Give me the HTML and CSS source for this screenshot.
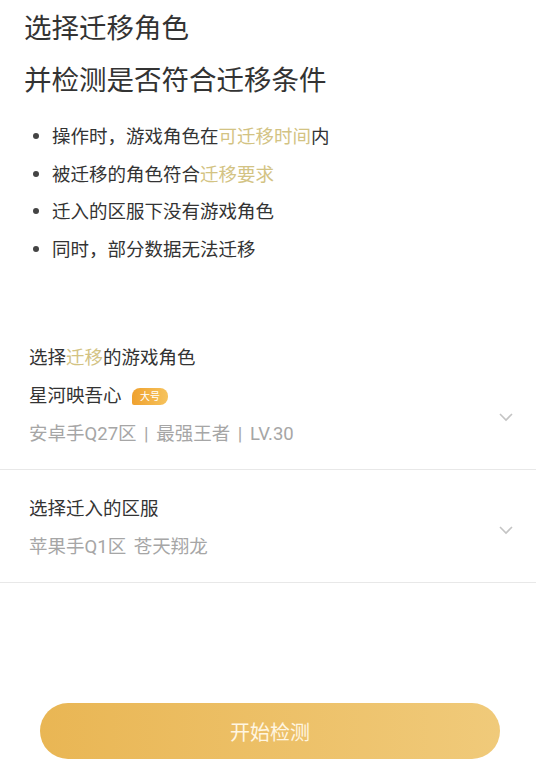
FILE: index.html
```html
<!DOCTYPE html>
<html lang="zh-CN">
<head>
    <meta charset="UTF-8">
    <meta name="viewport" content="width=device-width, initial-scale=1.0">
    <title>选择迁移角色</title>
    <link rel="stylesheet" href="styles.css">
</head>
<body>
    <div class="intro">
        <h1 class="title">选择迁移角色<br>并检测是否符合迁移条件</h1>
        <ul class="rules">
            <li>操作时，游戏角色在<span class="hl">可迁移时间</span>内</li>
            <li>被迁移的角色符合<span class="hl">迁移要求</span></li>
            <li>迁入的区服下没有游戏角色</li>
            <li>同时，部分数据无法迁移</li>
        </ul>
    </div>

    <div class="picker picker-first">
        <div class="picker-body">
            <div class="picker-label">选择<span class="hl">迁移</span>的游戏角色</div>
            <div class="picker-name">星河映吾心 <span class="badge">大号</span></div>
            <div class="picker-value">安卓手Q27区 | 最强王者 | LV.30</div>
        </div>
        <svg class="chevron" width="16" height="10" viewBox="0 0 16 10"><path d="M2 2 L8 8 L14 2" fill="none" stroke="#c4c4c4" stroke-width="1.6"/></svg>
    </div>

    <div class="picker">
        <div class="picker-body">
            <div class="picker-label">选择迁入的区服</div>
            <div class="picker-value">苹果手Q1区 苍天翔龙</div>
        </div>
        <svg class="chevron" width="16" height="10" viewBox="0 0 16 10"><path d="M2 2 L8 8 L14 2" fill="none" stroke="#c4c4c4" stroke-width="1.6"/></svg>
    </div>

    <button class="start">开始检测</button>
</body>
</html>
```

FILE: styles.css
```css
body {
    margin: 0;
    background: #fff;
    color: #333;
    font-family: "Noto Sans CJK SC", "Noto Sans", sans-serif;
}
.intro {
    padding: 0 24px;
}
.title {
    margin: 0;
    font-size: 27.5px;
    font-weight: 400;
    line-height: 52px;
    color: #333;
}
.rules {
    list-style: none;
    margin: 13px 0 0;
    padding: 0 0 0 28px;
    font-size: 18.5px;
    line-height: 37.5px;
}
.rules li {
    position: relative;
}
.rules li:before {
    content: '';
    position: absolute;
    left: -19px;
    top: 16px;
    width: 6px;
    height: 6px;
    border-radius: 50%;
    background: #444;
}
.hl { color: #d3c383; }
.picker {
    display: flex;
    padding: 20px 22px 16px 29px;
    border-bottom: 1px solid #e8e8e8;
    font-family: Roboto, "Noto Sans CJK SC", sans-serif;
    font-size: 18.5px;
    line-height: 38px;
}
.picker-first {
    margin-top: 52px;
}
.picker-body {
    flex: 1;
}
.picker-label, .picker-name { color: #333; }
.picker-value {
    color: #a6a6a6;
    word-spacing: 3px;
}
.badge {
    display: inline-block;
    vertical-align: 2px;
    margin-left: 6px;
    padding: 0 8px;
    height: 17px;
    line-height: 17px;
    font-size: 10px;
    color: #fff;
    border-radius: 8px 8px 8px 2px;
    background: linear-gradient(90deg, #efa12e, #f6c35d);
}
.chevron {
    align-self: flex-end;
    margin-bottom: 31px;
}
.start {
    display: block;
    width: 460px;
    height: 56px;
    margin: 120px 40px 0;
    border: none;
    border-radius: 28px;
    background: linear-gradient(90deg, #e9b654, #f0ca7a);
    color: #fff6e2;
    font-family: inherit;
    font-size: 20px;
    cursor: pointer;
}
```
